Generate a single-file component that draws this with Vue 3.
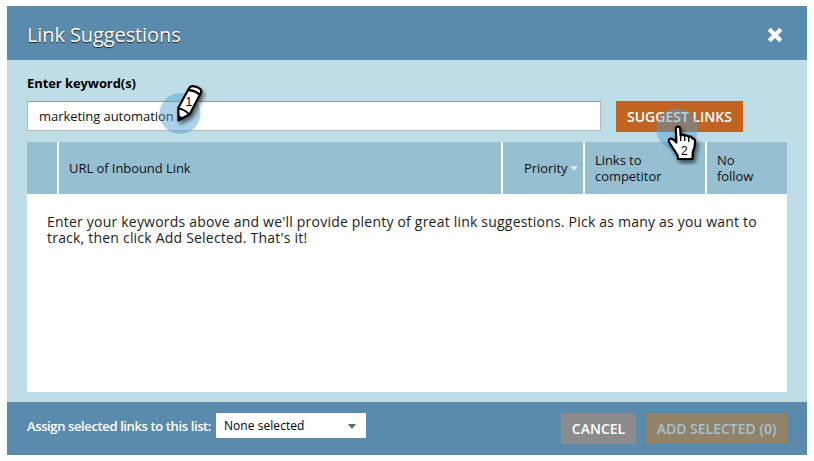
<script setup>
const columns = [
  { key: 'check', label: '' },
  { key: 'url', label: 'URL of Inbound Link' },
  { key: 'priority', label: 'Priority', sorted: true },
  { key: 'links', label: 'Links to competitor' },
  { key: 'follow', label: 'No follow' },
]
</script>

<template>
  <div class="dialog">
    <header class="head">
      <h1>Link Suggestions</h1>
      <svg class="close" width="16" height="16" viewBox="0 0 16 16">
        <path d="M3.200 3.200 L12.800 12.800 M12.800 3.200 L3.200 12.800" stroke="#fff" stroke-width="4.600" stroke-linecap="square" stroke-linejoin="round" transform="translate(.8 .8) scale(.9)" />
      </svg>
    </header>

    <main class="body">
      <label class="label">Enter keyword(s)</label>
      <div class="search">
        <div class="field"><span>marketing automation</span></div>
        <button class="btn suggest"><span>SUGGEST LINKS</span></button>
      </div>
      <section class="table">
        <div class="row">
          <div v-for="c in columns" :key="c.key" class="cell" :class="c.key">
            <span>{{ c.label }}</span>
            <i v-if="c.sorted" class="sort"></i>
          </div>
        </div>
        <p class="empty">Enter your keywords above and we'll provide plenty of great link suggestions. Pick as many as you want to<br />track, then click Add Selected. That's it!</p>
      </section>
    </main>

    <footer class="foot">
      <span class="assign">Assign selected links to this list:</span>
      <div class="select"><span>None selected</span><i></i></div>
      <button class="btn cancel"><span>CANCEL</span></button>
      <button class="btn add"><span>ADD SELECTED (0)</span></button>
    </footer>

    <svg class="marker pencil" width="60" height="60" viewBox="155 80 60 60">
      <circle cx="180" cy="113.500" r="20.500" fill="#4a9fce" fill-opacity=".46" />
      <g class="lift">
        <path d="M178.300 107.800 L189 88.300 Q190.300 86 192.500 86.200 Q197.500 86.600 200.300 89 Q201.900 90.600 200.800 92.900 L189.700 114.300 L178.500 120.300 Z" fill="#fff" stroke="#000" stroke-width="2.200" stroke-linejoin="round" />
        <path d="M188.500 89.900 Q195 90.300 199.800 94.600" fill="none" stroke="#000" stroke-width="2.500" />
        <path d="M178.400 108.300 Q185 109.500 189.300 114.300" fill="none" stroke="#000" stroke-width="1.800" />
        <path d="M178 115.300 Q181.500 116 183 118.500 L178 121.200 Z" fill="#000" />
      </g>
      <text x="185.600" y="106">1</text>
    </svg>

    <svg class="marker hand" width="60" height="60" viewBox="650 105 60 60">
      <circle cx="677" cy="129" r="20.800" fill="#4a9fce" fill-opacity=".46" />
      <g class="lift">
        <path d="M675.800 129 Q675.800 126.600 678 126.600 Q680.200 126.600 680.200 129 L680.600 135.500 Q682.200 133.900 684.400 135.600 Q686.700 134.600 688.500 136.700 Q691.200 135.800 692.400 138.400 Q695.100 138.600 695.100 141.400 Q695.100 147 692.800 152 L692.500 159 L678 159 L677.700 155.500 L669.300 142.500 Q668 139.700 670 138.800 Q672.500 138.100 676.400 142.500 Z" fill="#fff" stroke="#000" stroke-width="2.200" stroke-linejoin="round" />
        <path d="M680.700 135 V141 M684.700 136 V141 M688.700 137 V142" stroke="#000" stroke-width="1.400" />
      </g>
      <text x="681" y="154.500">2</text>
    </svg>
  </div>
</template>

<style>
body {
  margin: 0;
  background: #fff;
}
</style>

<style scoped>
.dialog {
  position: relative;
  box-sizing: border-box;
  width: 800px;
  height: 449px;
  margin: 6px 0 0 7px;
  display: flex;
  flex-direction: column;
  background: #bfdde7;
  color: #111;
  font-family: "Open Sans", "Noto Sans", sans-serif;
  font-size: 13px;
}
.dialog * {
  box-sizing: border-box;
}
span,
h1 {
  white-space: nowrap;
}
.head {
  height: 54px;
  padding: 0 24px 0 20px;
  display: flex;
  align-items: center;
  justify-content: space-between;
  background: #5b8bac;
}
h1 {
  margin: 3px 0 0;
  color: #fff;
  font-size: 20px;
  font-weight: 400;
  line-height: 28px;
  letter-spacing: -0.1px;
  text-shadow: 0 1px 1px #222;
}
.close {
  margin-top: 4px;
}
.body {
  height: 342px;
  padding: 14px 20px 10px;
}
.label {
  display: block;
  height: 27px;
  line-height: 19px;
  font-weight: 700;
  letter-spacing: -0.08px;
  color: #000;
}
.search {
  display: flex;
  gap: 15px;
}
.field {
  width: 574px;
  height: 30px;
  padding-left: 11px;
  border: 1px solid #b5b5b5;
  border-top-color: #949c9f;
  background: #fff;
  line-height: 28px;
  letter-spacing: -0.05px;
}
.btn {
  height: 31px;
  padding: 0;
  border: 0;
  color: #fff;
  font-family: inherit;
  font-size: 14px;
  font-weight: 600;
  line-height: 31px;
  text-align: center;
}
.suggest {
  width: 127px;
  background: #c26322;
}
.table {
  height: 250px;
  margin-top: 10px;
  background: #fff;
}
.row {
  display: grid;
  grid-template-columns: 30px 442px 80px 120px 80px;
  gap: 2px;
  height: 52px;
}
.cell {
  display: flex;
  align-items: center;
  padding-left: 10px;
  background: #96bfd1;
  line-height: 16px;
  letter-spacing: -0.06px;
  color: #111;
}
.cell.priority {
  padding-left: 21px;
}
.links span {
  width: 75px;
  white-space: normal;
}
.follow span {
  width: 40px;
  white-space: normal;
}
.sort {
  margin-left: 2px;
  border: 4px solid transparent;
  border-top: 5px solid #dfe5e7;
  border-bottom: 0;
}
.empty {
  margin: 0;
  padding: 20px 20px 0;
  font-size: 14px;
  line-height: 16px;
  letter-spacing: 0.208px;
  white-space: nowrap;
  color: #222;
}
.foot {
  height: 53px;
  padding: 11px 20px 0;
  display: flex;
  align-items: flex-start;
  background: #5b8bac;
}
.assign {
  width: 189px;
  line-height: 26px;
  color: #fff;
  font-weight: 600;
  letter-spacing: -0.38px;
}
.select {
  width: 150px;
  height: 25px;
  padding: 0 10px 0 8px;
  display: flex;
  align-items: center;
  justify-content: space-between;
  background: #fff;
  font-size: 12px;
  letter-spacing: 0.05px;
  color: #000;
}
.select i {
  border: 4px solid transparent;
  border-top: 5px solid #666;
  border-bottom: 0;
  margin-top: 2px;
}
.cancel {
  width: 75px;
  margin-left: auto;
  background: #8b8b8b;
}
.add {
  width: 141px;
  margin-left: 10px;
  background: #918268;
  color: #a5c1d2;
}
.marker {
  position: absolute;
}
.marker text {
  font: 12px "Liberation Sans", Arial, sans-serif;
  fill: #000;
}
.lift {
  filter: drop-shadow(2px 3px 2px rgba(0, 0, 0, 0.6));
}
.pencil {
  left: 148px;
  top: 74px;
}
.hand {
  left: 643px;
  top: 99px;
}
</style>
